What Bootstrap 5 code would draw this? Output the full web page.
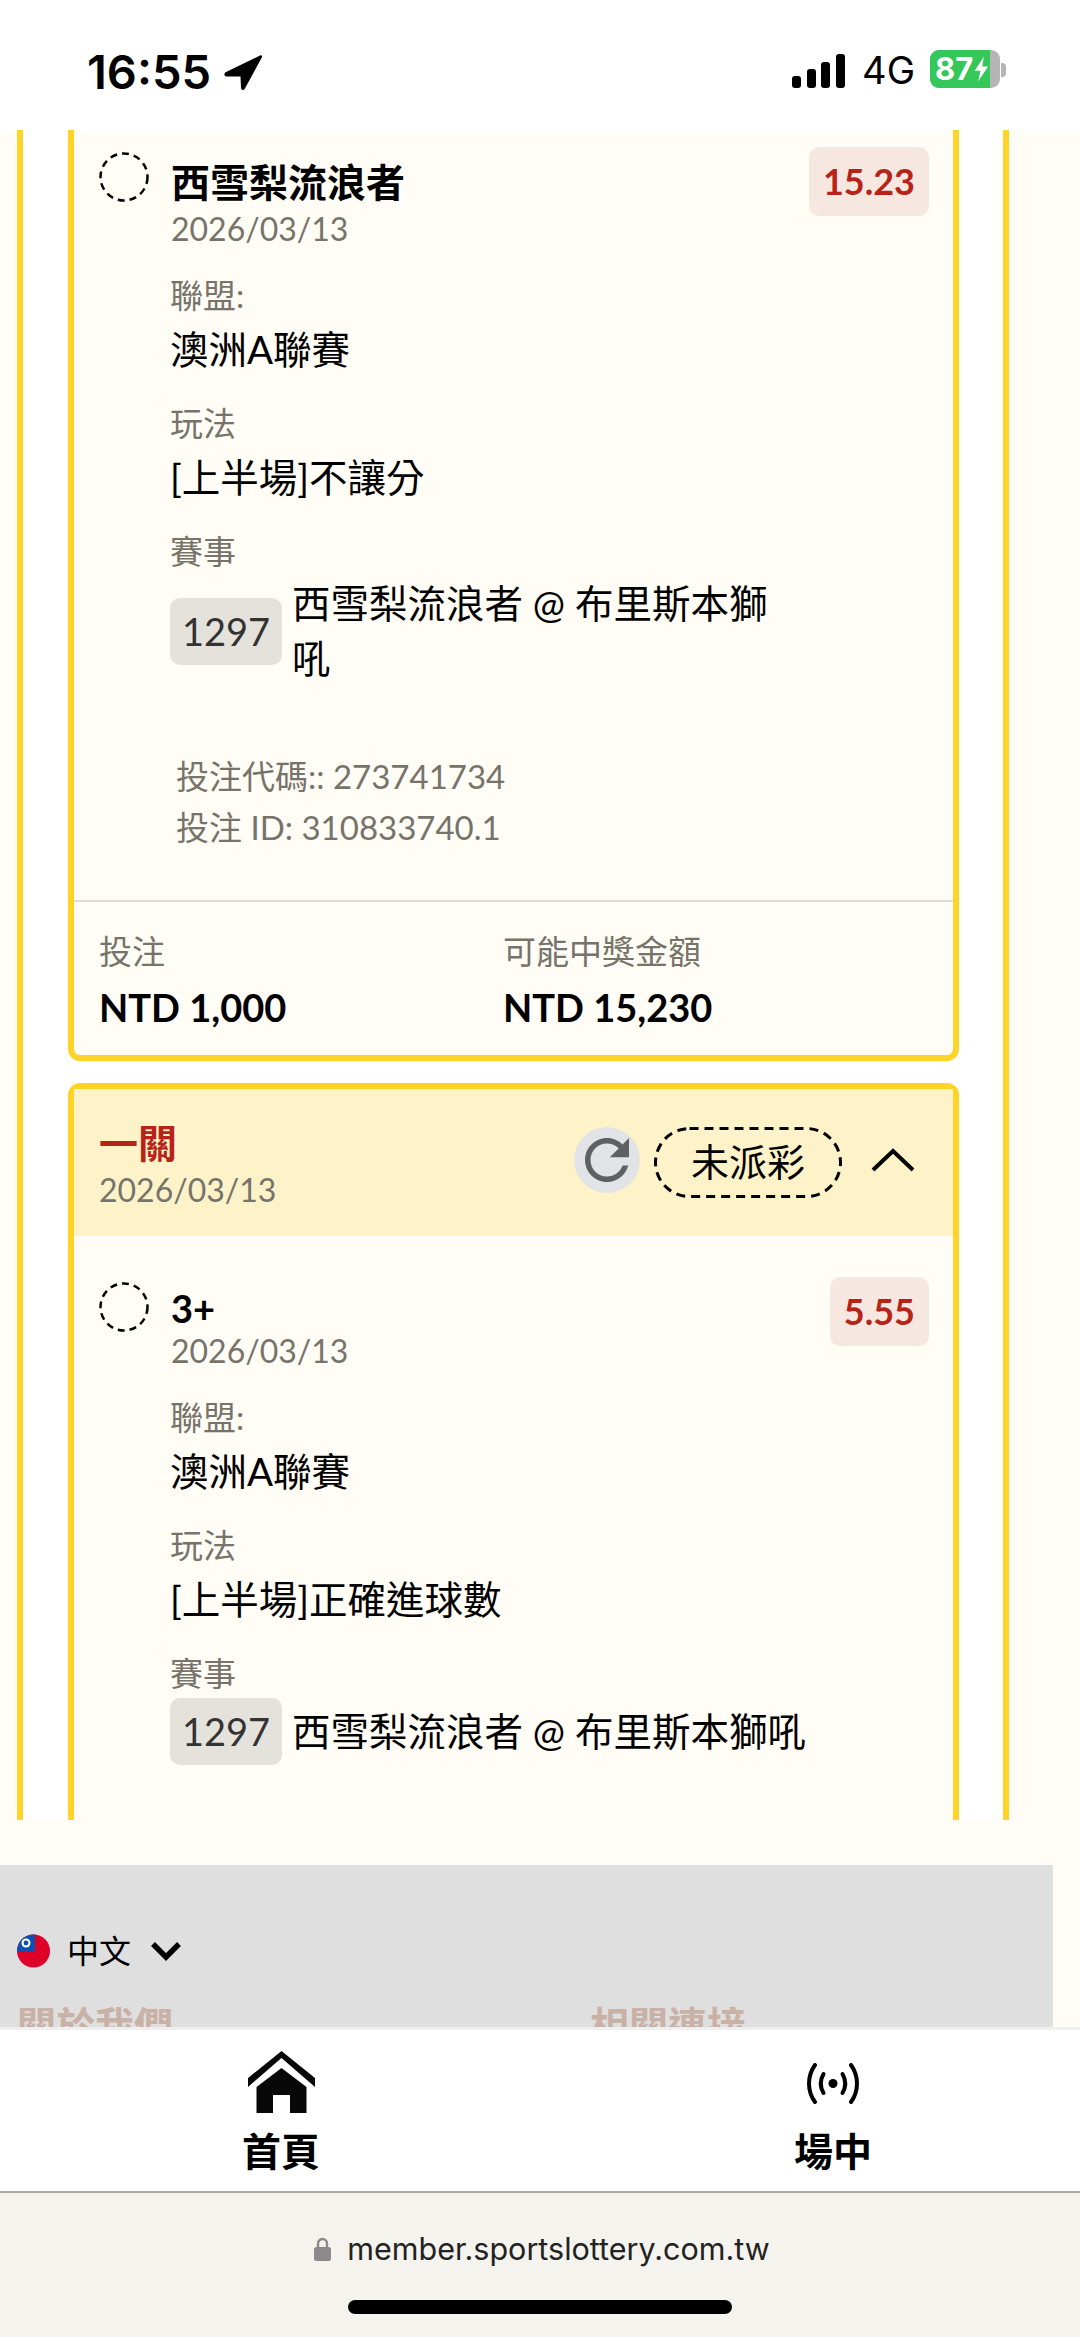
<!DOCTYPE html>
<html lang="zh-Hant">
<head>
  <meta charset="UTF-8">
  <meta name="viewport" content="width=device-width, initial-scale=1.0">
  <title>投注紀錄</title>
  <link href="https://cdn.jsdelivr.net/npm/bootstrap@5.3.0/dist/css/bootstrap.min.css" rel="stylesheet">
  <style>
    body { width: 1080px; height: 2337px; overflow: hidden; background: #fffdf5; color: #000; font-family: Lato, "Noto Sans CJK TC", sans-serif; }
    .phone-status { height: 130px; background: #fff; padding: 50px 74px 0 87px; font-family: Inter, sans-serif; }
    .clock { font-size: 47px; font-weight: 600; line-height: 44px; width: 137px; }
    .nav-arrow { margin-top: 5px; }
    .signal-bars { margin-top: 4px; }
    .net-label { font-size: 38px; line-height: 40px; margin: 0 15px 0 17px; }
    .batt { width: 70px; height: 38px; border-radius: 9px; overflow: hidden; background: #b5b5b5; }
    .batt-fill { width: 60px; background: #34c759; color: #fff; font-weight: 700; font-size: 31px; line-height: 38px; padding-left: 5px; }
    .batt-nub { width: 5px; height: 14px; background: #b5b5b5; border-radius: 0 4px 4px 0; margin-left: 1px; align-self: center; }

    .scroll-area { height: 1690px; overflow: hidden; }
    .outer-box { width: 992px; height: 1690px; margin-left: 17px; padding: 0 44px 0 45px; border-left: 6px solid #ffd426; border-right: 6px solid #ffd426; background: #fff; overflow: hidden; }
    .bet-box { background: #fffdf5; border: 6px solid #ffd426; border-radius: 12px; margin-bottom: 22px; }
    .bet-box.cut-top { border-top: 0; border-radius: 0 0 12px 12px; }
    .bet-box.open-end { border-bottom: 0; border-radius: 12px 12px 0 0; margin-bottom: 0; height: 900px; }
    .bet-head { height: 147px; background: #fef3c8; padding: 32px 38px 0 25px; }
    .bet-title { font-size: 39px; font-weight: 700; color: #b82318; line-height: 44px; }
    .bet-date { font-size: 32px; color: #77736b; line-height: 40px; }
    .head-date { margin-top: 5px; }
    .head-actions { margin-top: 6px; }
    .refresh-btn { width: 66px; height: 66px; border-radius: 50%; background: #e2e3e6; margin-left: 2px; }
    .status-pill { width: 188px; height: 71px; font-size: 38px; line-height: 69px; text-align: center; margin: 0 29px 0 14px; }
    .pill-dash { top: 0; left: 0; }
    .chevron-up { margin-top: 21px; }
    .pick { padding: 17px 24px 0 25px; }
    .pick-gap { padding-top: 41px; }
    .radio-ring { flex: none; margin: 5px 22px 0 0; }
    .pick-name { font-size: 38px; font-weight: 700; line-height: 46px; margin-top: 8px; }
    .name-cjk { font-size: 39px; line-height: 54px; }
    .odds { height: 69px; padding: 0 14px; background: #f6e8e1; border-radius: 10px; color: #b82318; font-size: 36px; font-weight: 700; line-height: 69px; }
    .pick-body { padding-left: 71px; }
    .info-key { font-size: 33px; color: #77736b; line-height: 44px; }
    .info-val { font-size: 38.5px; line-height: 56px; margin: 4px 0 24px; }
    .first-key { margin-top: 24px; }
    .match-no { width: 112px; height: 67px; background: #e5e2dc; border-radius: 10px; font-size: 38px; line-height: 67px; text-align: center; color: #333; flex: none; margin-right: 10px; }
    .match-name { font-size: 38.5px; line-height: 55px; width: 490px; }
    .match-row { margin-top: 3px; }
    .codes { padding: 65px 0 0 102px; font-size: 33px; line-height: 51px; color: #77736b; }
    .totals { border-top: 2px solid #dfdcd4; margin-top: 47px; padding: 25px 25px 0 25px; height: 155px; }
    .total-col { width: 404px; }
    .total-key { font-size: 33px; color: #77736b; line-height: 48px; }
    .total-val { font-size: 38px; font-weight: 700; line-height: 56px; margin-top: 4px; }

    .site-foot { height: 162px; width: 1053px; margin-top: 45px; background: #dfdfe0; padding: 68px 0 0 17px; overflow: hidden; }
    .lang-label { font-size: 32px; line-height: 36px; margin: 0 19px 0 17px; }
    .foot-links { margin-top: 33px; }
    .foot-link { flex: none; width: 573px; font-size: 39px; font-weight: 700; color: #c9b1a6; line-height: 46px; }
    .tab-bar { height: 166px; background: #fff; border-top: 3px solid #efefef; border-bottom: 2px solid #a9a9a9; }
    .tab-item { width: 540px; font-size: 39px; font-weight: 700; line-height: 44px; }
    .tab-left { padding: 21px 0 0 22px; }
    .tab-right { padding: 33px 0 0 46px; }
    .tab-left span { margin-top: 16px; }
    .tab-right span { margin-top: 25px; }
    .browser-bar { height: 144px; background: #f5f3ee; padding-top: 36px; }
    .url-text { font-family: Inter, sans-serif; font-size: 30.5px; line-height: 40px; color: #222; margin-left: 16px; }
    .home-pill { width: 384px; height: 14px; border-radius: 7px; background: #000; margin: 31px auto 0; }
  </style>
</head>
<body>
  <!-- status bar -->
  <div class="phone-status d-flex align-items-start">
    <div class="clock">16:55</div>
    <svg width="38" height="35" viewBox="0 0 38 35" class="nav-arrow"><path d="M36 0.5 L2 17 C-0.5 18.5 0 21.5 3 21.5 L16.5 21.5 L17 33 C17.2 35.5 20.5 35.5 21.2 33 L37.8 2.5 C38.5 0.8 37.5 -0.2 36 0.5Z" fill="#000"/></svg>
    <div class="ms-auto d-flex align-items-start">
      <svg width="53" height="34" viewBox="0 0 53 34" class="signal-bars"><rect x="0" y="22" width="9" height="12" rx="3"/><rect x="15" y="15" width="9" height="19" rx="3"/><rect x="29" y="8" width="9" height="26" rx="3"/><rect x="44" y="0" width="9" height="34" rx="3"/></svg>
      <div class="net-label">4G</div>
      <div class="batt d-flex">
        <div class="batt-fill d-flex">87<svg width="20" height="38" viewBox="0 0 20 38"><path d="M13 4 L2 21 H9 L6 34 L18 16 H11Z" fill="#fff"/></svg></div>
      </div>
      <div class="batt-nub"></div>
    </div>
  </div>

  <div class="scroll-area">
    <div class="outer-box">
      <!-- first bet, top already scrolled away -->
      <div class="bet-box cut-top">
        <div class="pick">
          <div class="d-flex align-items-start">
            <svg class="radio-ring" width="50" height="50" viewBox="0 0 50 50"><circle cx="25" cy="25" r="23.5" fill="none" stroke="#000" stroke-width="2.5" stroke-dasharray="7 5"/></svg>
            <div class="flex-grow-1">
              <div class="pick-name name-cjk">西雪梨流浪者</div>
              <div class="bet-date">2026/03/13</div>
            </div>
            <div class="odds">15.23</div>
          </div>
          <div class="pick-body">
            <div class="info-key first-key">聯盟:</div>
            <div class="info-val">澳洲A聯賽</div>
            <div class="info-key">玩法</div>
            <div class="info-val">[上半場]不讓分</div>
            <div class="info-key">賽事</div>
            <div class="d-flex align-items-center match-row">
              <div class="match-no">1297</div>
              <div class="match-name">西雪梨流浪者 @ 布里斯本獅吼</div>
            </div>
          </div>
        </div>
        <div class="codes">
          <div>投注代碼:: 273741734</div>
          <div>投注 ID: 310833740.1</div>
        </div>
        <div class="totals d-flex">
          <div class="total-col">
            <div class="total-key">投注</div>
            <div class="total-val">NTD 1,000</div>
          </div>
          <div>
            <div class="total-key">可能中獎金額</div>
            <div class="total-val">NTD 15,230</div>
          </div>
        </div>
      </div>

      <!-- second bet -->
      <div class="bet-box open-end">
        <div class="bet-head d-flex justify-content-between align-items-start">
          <div>
            <div class="bet-title">一關</div>
            <div class="bet-date head-date">2026/03/13</div>
          </div>
          <div class="d-flex align-items-start head-actions">
            <div class="refresh-btn"><svg width="66" height="66" viewBox="0 0 24 24"><path fill="#5f6062" d="M17.65 6.35C16.2 4.9 14.21 4 12 4c-4.42 0-7.99 3.58-7.99 8s3.57 8 7.99 8c3.73 0 6.84-2.55 7.73-6h-2.08c-.82 2.33-3.04 4-5.65 4-3.31 0-6-2.69-6-6s2.69-6 6-6c1.66 0 3.14.69 4.22 1.78L13 11h7V4l-2.35 2.35z"/></svg></div>
            <div class="status-pill position-relative">未派彩<svg class="pill-dash position-absolute" width="188" height="71" viewBox="0 0 188 71"><rect x="1.5" y="1.5" width="185" height="68" rx="34" fill="none" stroke="#000" stroke-width="3" stroke-dasharray="9 6"/></svg></div>
            <svg width="44" height="24" viewBox="0 0 44 24" class="chevron-up"><path d="M2 22 L22 3 L42 22" fill="none" stroke="#000" stroke-width="4"/></svg>
          </div>
        </div>
        <div class="pick pick-gap">
          <div class="d-flex align-items-start">
            <svg class="radio-ring" width="50" height="50" viewBox="0 0 50 50"><circle cx="25" cy="25" r="23.5" fill="none" stroke="#000" stroke-width="2.5" stroke-dasharray="7 5"/></svg>
            <div class="flex-grow-1">
              <div class="pick-name">3+</div>
              <div class="bet-date">2026/03/13</div>
            </div>
            <div class="odds">5.55</div>
          </div>
          <div class="pick-body">
            <div class="info-key first-key">聯盟:</div>
            <div class="info-val">澳洲A聯賽</div>
            <div class="info-key">玩法</div>
            <div class="info-val">[上半場]正確進球數</div>
            <div class="info-key">賽事</div>
            <div class="d-flex align-items-center match-row">
              <div class="match-no">1297</div>
              <div class="match-name text-nowrap">西雪梨流浪者 @ 布里斯本獅吼</div>
            </div>
          </div>
        </div>
      </div>
    </div>
  </div>

  <!-- site footer, cut off by the tab bar -->
  <div class="site-foot">
    <div class="d-flex align-items-center">
      <svg width="33" height="34" viewBox="0 0 33 34"><defs><clipPath id="flagClip"><circle cx="16.5" cy="17" r="16.5"/></clipPath></defs><g clip-path="url(#flagClip)"><rect width="33" height="34" fill="#de0029"/><rect width="18" height="17" fill="#0f4fb0"/><circle cx="9" cy="9" r="4.5" fill="#fff"/><circle cx="9" cy="9" r="2.4" fill="#0f4fb0"/></g></svg>
      <div class="lang-label">中文</div>
      <svg width="32" height="20" viewBox="0 0 32 20"><path d="M3 3 L16 16 L29 3" fill="none" stroke="#000" stroke-width="5.5"/></svg>
    </div>
    <div class="foot-links d-flex">
      <div class="foot-link">關於我們</div>
      <div class="foot-link">相關連接</div>
    </div>
  </div>

  <!-- tab bar -->
  <div class="tab-bar d-flex">
    <div class="tab-item tab-left d-flex flex-column align-items-center">
      <svg width="67" height="62" viewBox="0 0 67 62"><path d="M33.5 0 L67 27 V36 L33.5 7 L0 36 V27Z" fill="#080808"/><path d="M33.5 17 L58.5 36 V62 H42 V44 H25 V62 H8.5 V36Z" fill="#080808"/></svg>
      <span>首頁</span>
    </div>
    <div class="tab-item tab-right d-flex flex-column align-items-center">
      <svg width="52" height="41" viewBox="0 0 52 41" fill="none" stroke="#000" stroke-width="4" stroke-linecap="round"><circle cx="26" cy="20.5" r="4.5" fill="#000" stroke="none"/><path d="M16.5 11 C13 17 13 24 16.5 30"/><path d="M35.5 11 C39 17 39 24 35.5 30"/><path d="M8 2 C0 13 0 28 8 39"/><path d="M44 2 C52 13 52 28 44 39"/></svg>
      <span>場中</span>
    </div>
  </div>

  <!-- browser url bar -->
  <div class="browser-bar">
    <div class="d-flex justify-content-center align-items-center ps-1">
      <svg width="17" height="24" viewBox="0 0 17 24"><path d="M4 11 V6.5 a4.5 4.5 0 0 1 9 0 V11" fill="none" stroke="#8a8a8a" stroke-width="2.4"/><rect x="0" y="10" width="17" height="14" rx="2.5" fill="#8a8a8a"/></svg>
      <span class="url-text">member.sportslottery.com.tw</span>
    </div>
    <div class="home-pill"></div>
  </div>
</body>
</html>
